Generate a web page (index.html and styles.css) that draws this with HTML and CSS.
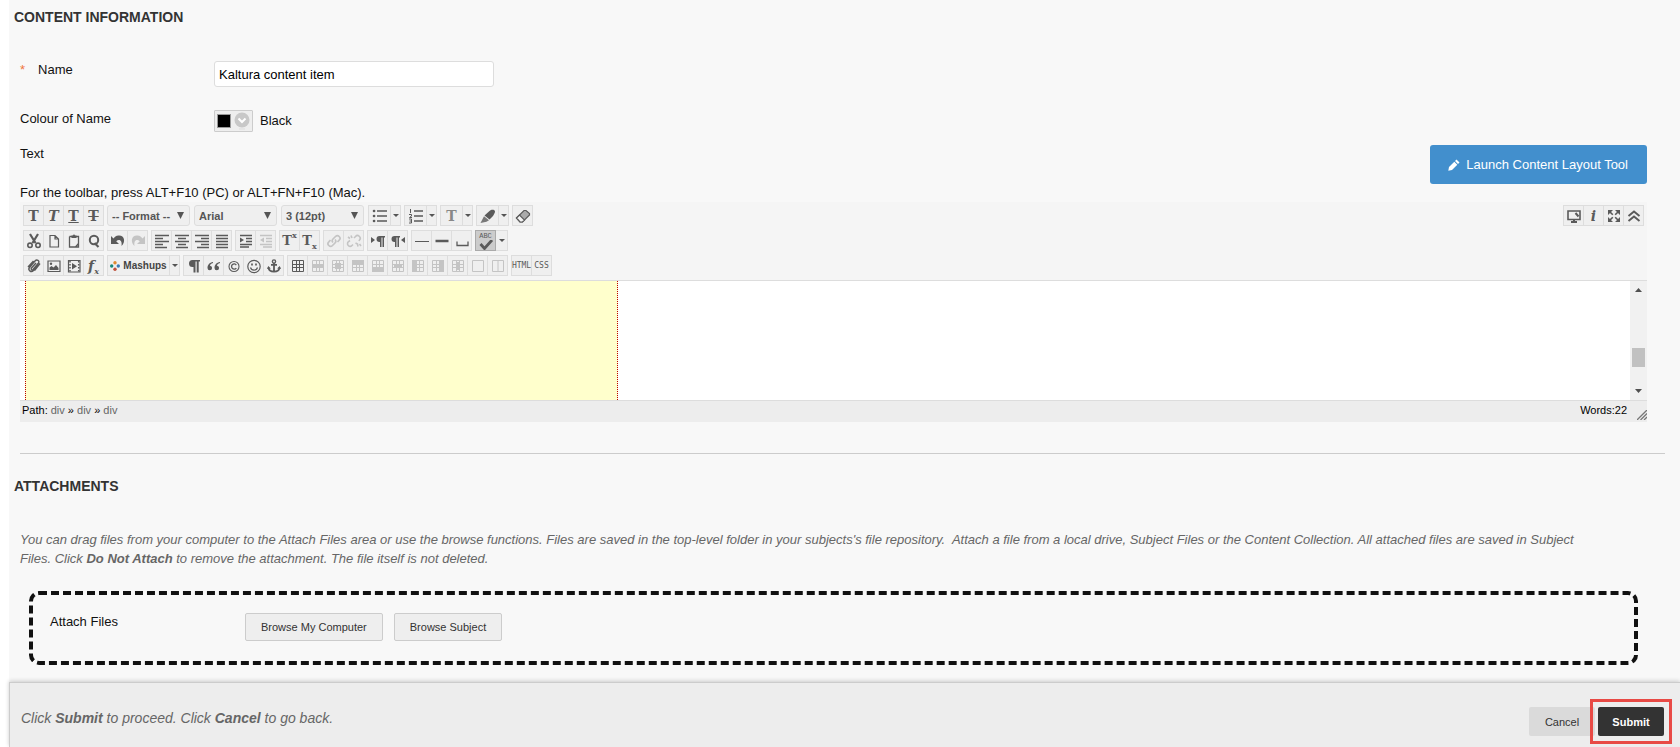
FILE: index.html
```
<!DOCTYPE html>
<html lang="en">

<head>
  <meta charset="utf-8">
  <meta name="viewport" content="width=device-width">
  <title>Edit Item</title>
  <link rel="stylesheet" href="styles.css">
</head>

<body>
  <!-- toolbar icons, all on a 16px grid -->
  <svg class="sprite" aria-hidden="true">
    <symbol id="cut" viewBox="0 0 16 16"><path d="M4 1l5.500 9M12 1L6.500 10" stroke="currentColor" stroke-width="2.200" fill="none"/><circle cx="4" cy="12.300" r="2.200" fill="none" stroke="currentColor" stroke-width="1.600"/><circle cx="12" cy="12.300" r="2.200" fill="none" stroke="currentColor" stroke-width="1.600"/></symbol>
    <symbol id="page" viewBox="0 0 16 16"><path d="M4 2.500h5l3.500 3.500v8H4zM9 2.500V6h3.500" fill="none" stroke="currentColor" stroke-width="1.200"/></symbol>
    <symbol id="paste" viewBox="0 0 16 16"><path d="M3.500 3.500h9v10.500H9.500M3.500 3.500V14H9.500l3-3.500" fill="none" stroke="currentColor" stroke-width="1.300"/><path d="M5.500 5V2.500h1.500a1 1 0 0 1 2 0h1.500V5z" fill="currentColor"/></symbol>
    <symbol id="find" viewBox="0 0 16 16"><circle cx="8" cy="7" r="4.200" fill="none" stroke="currentColor" stroke-width="2"/><path d="M8.500 10l4 4" stroke="currentColor" stroke-width="2.200"/></symbol>
    <symbol id="undo" viewBox="0 0 16 16"><path d="M1 3v8h8L6.200 8.200C9 5.500 12.500 7 11.500 13 16 9 14.500 2 8.500 2.500 6 2.700 4.500 4 3.500 5.500z" fill="currentColor"/></symbol>
    <symbol id="redo" viewBox="0 0 16 16"><path d="M15 3v8H7l2.800-2.800C7 5.500 3.500 7 4.500 13 0 9 1.500 2 7.500 2.500c2.500.2 4 1.500 5 3z" fill="currentColor"/></symbol>
    <symbol id="left" viewBox="0 0 16 16"><path d="M1 2.500h14M1 5.500h8M1 8.500h14M1 11.500h8M1 14.500h12" stroke="currentColor" stroke-width="1.500"/></symbol>
    <symbol id="center" viewBox="0 0 16 16"><path d="M1 2.500h14M4 5.500h8M1 8.500h14M4 11.500h8M2 14.500h12" stroke="currentColor" stroke-width="1.500"/></symbol>
    <symbol id="right" viewBox="0 0 16 16"><path d="M1 2.500h14M7 5.500h8M1 8.500h14M7 11.500h8M3 14.500h12" stroke="currentColor" stroke-width="1.500"/></symbol>
    <symbol id="justify" viewBox="0 0 16 16"><path d="M2 2.500h12M2 5.500h12M2 8.500h12M2 11.500h12M2 14.500h12" stroke="currentColor" stroke-width="1.500"/></symbol>
    <symbol id="indent" viewBox="0 0 16 16"><path d="M2 2.500h12M8 5.500h6M8 8.500h6M2 11.500h12M2 14h9" stroke="currentColor" stroke-width="1.500"/><path d="M2 4.500L6 7 2 9.500z" fill="currentColor"/></symbol>
    <symbol id="outdent" viewBox="0 0 16 16"><path d="M2 2.500h12M8 5.500h6M8 8.500h6M2 11.500h12M5 14h9" stroke="currentColor" stroke-width="1.500"/><path d="M6 4.500L2 7l4 2.500z" fill="currentColor"/></symbol>
    <symbol id="bullets" viewBox="0 0 16 16"><path d="M5 3h10M5 8h10M5 13h10" stroke="currentColor" stroke-width="1.500"/><path d="M2 3h.1M2 8h.1M2 13h.1" stroke="currentColor" stroke-width="2.600" stroke-linecap="round"/></symbol>
    <symbol id="numbers" viewBox="0 0 16 16"><path d="M6 3h9M6 8h9M6 13h9" stroke="currentColor" stroke-width="1.600"/><path d="M2.500 1v4M1 6.500h2.500V8L1.500 9.500h2.500M1 11h2.500v4H1M1.500 13h2" fill="none" stroke="currentColor" stroke-width="1"/></symbol>
    <symbol id="marker" viewBox="0 0 16 16"><path d="M9.500 3c2-2 5.500-1.500 5.500.5 0 1-1 3-2 4.500L9.500 11.500 4.500 7.500z" fill="currentColor"/><path d="M4 8.200l5 4-2.500 1.500L.5 15z" fill="currentColor" opacity=".8"/></symbol>
    <symbol id="eraser" viewBox="0 0 16 16"><path d="M1.500 10L9 2.500h2l3.500 3v1.500L7.500 14H5z" fill="#aaa" stroke="currentColor" stroke-width="1.200"/><path d="M1.500 10l3-3 5 5-2 2H5z" fill="#f4f4f4" stroke="currentColor" stroke-width="1.200"/></symbol>
    <symbol id="link" viewBox="0 0 16 16"><path d="M7 9.500a2.500 2.500 0 0 1 0-3.500l2.500-2.500a2.500 2.500 0 0 1 3.700 3.700L11.500 9M9 6.500a2.500 2.500 0 0 1 0 3.500l-2.500 2.500a2.500 2.500 0 0 1-3.700-3.700L4.500 7" fill="none" stroke="currentColor" stroke-width="1.700"/></symbol>
    <symbol id="unlink" viewBox="0 0 16 16"><path d="M8 5l1.500-1.500a2.500 2.500 0 0 1 4 3.500L13 8M7 11.500l-1 1a2.500 2.500 0 0 1-3.700-3.700L4 7.500M9.500 10l2 1 .5 2.500M5 2.500L6 5M13.500 11l1.500 2M2 4l2 1.500" fill="none" stroke="currentColor" stroke-width="1.600"/></symbol>
    <symbol id="ltr" viewBox="0 0 16 16"><path d="M15 3H9.500a3 3 0 0 0 0 6h.5v5h1.500V4.500h1V14H14V4.500h1zM1 4l4 3-4 3z" fill="currentColor"/></symbol>
    <symbol id="rtl" viewBox="0 0 16 16"><path d="M10 3H4.500a3 3 0 0 0 0 6H5v5h1.500V4.500h1V14H9V4.500h1zM15 4l-4 3 4 3z" fill="currentColor"/></symbol>
    <symbol id="rule" viewBox="0 0 16 16"><path d="M1 8.500h14" stroke="currentColor"/></symbol>
    <symbol id="thick" viewBox="0 0 16 16"><path d="M1.500 8h13" stroke="currentColor" stroke-width="2.500"/></symbol>
    <symbol id="space" viewBox="0 0 16 16"><path d="M3 8.500v4h11v-4" fill="none" stroke="currentColor" stroke-width="1.300"/></symbol>
    <symbol id="check" viewBox="0 0 16 10"><path d="M2.500 4l4 4.500L14 0" fill="none" stroke="currentColor" stroke-width="2.800"/></symbol>
    <symbol id="clip" viewBox="0 0 16 16"><path d="M12.500 7l-5 5.500c-2.500 2.500-6-.5-4-3L9 3c1.800-2 5-.3 3.500 2L7 11.500c-1.200 1-2.500-.3-1.500-1.500l4.500-5M14 5.500l-5.500 7.200M2 9l5.500-6" fill="none" stroke="currentColor" stroke-width="1.400"/></symbol>
    <symbol id="image" viewBox="0 0 16 16"><path d="M2 3h12v10.500H2z" fill="none" stroke="currentColor" stroke-width="1.200"/><path d="M3.500 12V9.500l2-1.500 2 1.500L10 7l2.500 3v2z" fill="currentColor"/><circle cx="5" cy="5.800" r="1.200" fill="currentColor"/></symbol>
    <symbol id="video" viewBox="0 0 16 16"><path d="M2.500 2.500h11.500V14H2.500z" fill="none" stroke="currentColor" stroke-width="1.200"/><path d="M6 5l5 3.200-5 3.300z" fill="currentColor"/><path d="M4 3v11M12.700 3v11" stroke="currentColor" stroke-width="1.500" stroke-dasharray="1.500 1.500"/></symbol>
    <symbol id="quote" viewBox="0 0 16 16"><path d="M7 4C3.500 4.500 1.500 7 1.500 10a2.300 2.300 0 1 0 2.500-2.300C4.200 6.500 5.200 5.300 7 5zM14 4c-3.500.5-5.500 3-5.500 6A2.300 2.300 0 1 0 11 7.700c.2-1.200 1.200-2.400 3-2.700z" fill="currentColor"/></symbol>
    <symbol id="pilcrow" viewBox="0 0 16 16"><path d="M14 2H6.500a3.500 3.500 0 0 0 0 7H7.500v5.500h2V3.500h1.200v11h2v-11H14z" fill="currentColor"/></symbol>
    <symbol id="copyright" viewBox="0 0 16 16"><circle cx="8" cy="8.500" r="5" fill="none" stroke="currentColor" stroke-width="1.100"/><path d="M10.300 7a2.600 2.600 0 1 0 0 3" fill="none" stroke="currentColor" stroke-width="1.300"/></symbol>
    <symbol id="smile" viewBox="0 0 16 16"><circle cx="8" cy="8.500" r="6.200" fill="none" stroke="currentColor" stroke-width="1.200"/><path d="M4.500 9.500c1 3.500 6 3.500 7 0" fill="none" stroke="currentColor" stroke-width="1.200"/><path d="M6 5.500v2M10 5.500v2" stroke="currentColor" stroke-width="1.700"/></symbol>
    <symbol id="anchor" viewBox="0 0 16 16"><circle cx="8" cy="3.500" r="1.600" fill="none" stroke="currentColor" stroke-width="1.400"/><path d="M8 5v9M5 6.800h6M2.500 9.500c.5 5.500 10.500 5.500 11 0" fill="none" stroke="currentColor" stroke-width="1.800"/><path d="M1 11l1.300-3 2.500 2.500zM15 11l-1.300-3-2.500 2.500z" fill="currentColor"/></symbol>
    <symbol id="grid" viewBox="0 0 16 16"><path d="M2.500 2.500h11v11h-11zM2.500 6.500h11M2.500 9.500h11M6.500 2.500v11M9.500 2.500v11" fill="none" stroke="currentColor"/></symbol>
    <symbol id="cell" viewBox="0 0 16 16"><path d="M2.500 2.500h11v11h-11z" fill="none" stroke="currentColor"/></symbol>
    <symbol id="monitor" viewBox="0 0 16 16"><path d="M2 3h12v8.500H2z" fill="none" stroke="currentColor" stroke-width="1.600"/><path d="M5 14h6M8 11v3M9.500 5l3 3.500" stroke="currentColor" stroke-width="2"/></symbol>
    <symbol id="expand" viewBox="0 0 16 16"><path d="M2 2h5L2 7zM14 2v5L9 2zM2 14V9l5 5zM14 14H9l5-5z" fill="currentColor"/><path d="M3 3l3.800 3.800M13 3L9.200 6.800M3 13l3.800-3.800M13 13L9.200 9.200" stroke="currentColor" stroke-width="1.600"/></symbol>
    <symbol id="collapse" viewBox="0 0 16 16"><path d="M2.500 8L8 3.500 13.500 8M2.500 13L8 8.500l5.500 4.500" fill="none" stroke="currentColor" stroke-width="1.900"/></symbol>
  </svg>

  <main class="page">
    <form class="content-form" id="content-form">
      <section class="step">
        <h2>Content Information</h2>
        <div class="field name-field">
          <label for="name"><span class="required">*</span>Name</label>
          <input type="text" id="name" value="Kaltura content item">
        </div>
        <div class="field colour-field">
          <label for="colour">Colour of Name</label>
          <button type="button" class="colour" id="colour">
            <span class="swatch"></span>
            <svg width="16" height="18" viewBox="0 0 16 18"><circle cx="8" cy="8" r="7.500" fill="#c8c8c8"/><path d="M4.500 6.500L8 10l3.500-3.500" fill="none" stroke="#fff" stroke-width="2"/><path d="M5 17h6" stroke="#ddd"/></svg>
          </button>
          <span>Black</span>
        </div>
        <div class="text-head">
          <span>Text</span>
          <button type="button" class="launch">
            <svg width="12" height="12" viewBox="0 0 12 12"><path d="M8.500.5l3 3L10 5 7 2zM6.300 2.700l3 3L4 11l-3.700.7L1 8z" fill="#fff"/></svg>
            Launch Content Layout Tool
          </button>
        </div>
        <p class="hint">For the toolbar, press ALT+F10 (PC) or ALT+FN+F10 (Mac).</p>

        <div class="editor">
          <div class="toolbar">
            <div class="toolrow">
              <div class="group">
                <button type="button" class="serif">T</button>
                <button type="button" class="serif italic">T</button>
                <button type="button" class="serif underline">T</button>
                <button type="button" class="serif strike">T</button>
              </div>
              <select aria-label="Format"><option>-- Format --</option></select>
              <select aria-label="Font"><option>Arial</option></select>
              <select aria-label="Size"><option>3 (12pt)</option></select>
              <div class="group split">
                <button type="button" aria-label="Bullets"><svg><use href="#bullets"/></svg></button>
                <button type="button" class="arrow" aria-label="Bullet styles"></button>
              </div>
              <div class="group split">
                <button type="button" aria-label="Numbers"><svg><use href="#numbers"/></svg></button>
                <button type="button" class="arrow" aria-label="Number styles"></button>
              </div>
              <div class="group split">
                <button type="button" class="serif light">T</button>
                <button type="button" class="arrow" aria-label="Text colours"></button>
              </div>
              <div class="group split">
                <button type="button" aria-label="Highlight"><svg><use href="#marker"/></svg></button>
                <button type="button" class="arrow" aria-label="Highlight colours"></button>
              </div>
              <div class="group">
                <button type="button" aria-label="Remove formatting"><svg><use href="#eraser"/></svg></button>
              </div>
              <div class="group end">
                <button type="button" aria-label="Preview"><svg><use href="#monitor"/></svg></button>
                <button type="button" class="serif italic">i</button>
                <button type="button" aria-label="Full screen"><svg><use href="#expand"/></svg></button>
                <button type="button" aria-label="Show less"><svg><use href="#collapse"/></svg></button>
              </div>
            </div>

            <div class="toolrow">
              <div class="group">
                <button type="button" aria-label="Cut"><svg><use href="#cut"/></svg></button>
                <button type="button" aria-label="Copy"><svg><use href="#page"/></svg></button>
                <button type="button" aria-label="Paste"><svg><use href="#paste"/></svg></button>
                <button type="button" aria-label="Find"><svg><use href="#find"/></svg></button>
              </div>
              <div class="group">
                <button type="button" aria-label="Undo"><svg><use href="#undo"/></svg></button>
                <button type="button" aria-label="Redo" disabled><svg><use href="#redo"/></svg></button>
              </div>
              <div class="group">
                <button type="button" aria-label="Align left"><svg><use href="#left"/></svg></button>
                <button type="button" aria-label="Align center"><svg><use href="#center"/></svg></button>
                <button type="button" aria-label="Align right"><svg><use href="#right"/></svg></button>
                <button type="button" aria-label="Justify"><svg><use href="#justify"/></svg></button>
              </div>
              <div class="group">
                <button type="button" aria-label="Indent"><svg><use href="#indent"/></svg></button>
                <button type="button" aria-label="Outdent" disabled><svg><use href="#outdent"/></svg></button>
              </div>
              <div class="group">
                <button type="button" class="serif small">T<sup>x</sup></button>
                <button type="button" class="serif small">T<sub>x</sub></button>
              </div>
              <div class="group">
                <button type="button" aria-label="Link" disabled><svg><use href="#link"/></svg></button>
                <button type="button" aria-label="Unlink" disabled><svg><use href="#unlink"/></svg></button>
              </div>
              <div class="group">
                <button type="button" aria-label="Left to right"><svg><use href="#ltr"/></svg></button>
                <button type="button" aria-label="Right to left"><svg><use href="#rtl"/></svg></button>
              </div>
              <div class="group">
                <button type="button" aria-label="Thin line"><svg><use href="#rule"/></svg></button>
                <button type="button" aria-label="Thick line"><svg><use href="#thick"/></svg></button>
                <button type="button" aria-label="Space"><svg><use href="#space"/></svg></button>
              </div>
              <div class="group">
                <button type="button" class="spell">ABC<svg><use href="#check"/></svg></button>
                <button type="button" class="arrow" aria-label="Languages"></button>
              </div>
            </div>

            <div class="toolrow">
              <div class="group">
                <button type="button" aria-label="Attach"><svg><use href="#clip"/></svg></button>
                <button type="button" aria-label="Image"><svg><use href="#image"/></svg></button>
                <button type="button" aria-label="Media"><svg><use href="#video"/></svg></button>
                <button type="button" class="serif italic fx"><span>f</span><sub>x</sub></button>
              </div>
              <div class="group">
                <button type="button" class="mashups"><svg viewBox="0 0 10 10"><circle cx="5" cy="1.700" r="1.700" fill="#e08a30"/><circle cx="1.700" cy="5" r="1.700" fill="#16867a"/><circle cx="8.300" cy="5" r="1.700" fill="#3a7ab5"/><circle cx="5" cy="8.300" r="1.700" fill="#c0503c"/></svg>Mashups</button>
                <button type="button" class="arrow" aria-label="Mashup types"></button>
              </div>
              <div class="group">
                <button type="button" aria-label="Paragraph marks"><svg><use href="#pilcrow"/></svg></button>
                <button type="button" aria-label="Quote"><svg><use href="#quote"/></svg></button>
                <button type="button" aria-label="Symbol"><svg><use href="#copyright"/></svg></button>
                <button type="button" aria-label="Emoticon"><svg><use href="#smile"/></svg></button>
                <button type="button" aria-label="Anchor"><svg><use href="#anchor"/></svg></button>
              </div>
              <div class="group">
                <button type="button" aria-label="Table"><svg><use href="#grid"/></svg></button>
                <button type="button" aria-label="Row properties" disabled><svg viewBox="0 0 16 16"><use href="#grid"/><path d="M2 6h12v4H2z" fill="currentColor"/></svg></button>
                <button type="button" aria-label="Cell properties" disabled><svg viewBox="0 0 16 16"><use href="#grid"/><path d="M5 5h6v6H5z" fill="currentColor"/></svg></button>
                <button type="button" aria-label="Row above" disabled><svg viewBox="0 0 16 16"><use href="#grid"/><path d="M2 2h12v4H2z" fill="currentColor"/></svg></button>
                <button type="button" aria-label="Row below" disabled><svg viewBox="0 0 16 16"><use href="#grid"/><path d="M2 10h12v4H2z" fill="currentColor"/></svg></button>
                <button type="button" aria-label="Delete row" disabled><svg viewBox="0 0 16 16"><use href="#grid"/><path d="M4 6h8v4H4z" fill="currentColor"/></svg></button>
                <button type="button" aria-label="Column before" disabled><svg viewBox="0 0 16 16"><use href="#grid"/><path d="M2 2h4v12H2z" fill="currentColor"/></svg></button>
                <button type="button" aria-label="Column after" disabled><svg viewBox="0 0 16 16"><use href="#grid"/><path d="M10 2h4v12h-4z" fill="currentColor"/></svg></button>
                <button type="button" aria-label="Delete column" disabled><svg viewBox="0 0 16 16"><use href="#grid"/><path d="M6 4h4v8H6z" fill="currentColor"/></svg></button>
                <button type="button" aria-label="Merge cells" disabled><svg><use href="#cell"/></svg></button>
                <button type="button" aria-label="Split cells" disabled><svg viewBox="0 0 16 16"><use href="#cell"/><path d="M8 3v11" stroke="currentColor"/></svg></button>
              </div>
              <div class="group">
                <button type="button" class="code">HTML</button>
                <button type="button" class="code">CSS</button>
              </div>
            </div>
          </div>

          <div class="canvas">
            <div class="document"><div class="embed"></div></div>
            <div class="scrollbar">
              <svg width="7" height="4" viewBox="0 0 7 4"><path d="M0 4l3.500-4L7 4z" fill="#505050"/></svg>
              <span class="thumb"></span>
              <svg width="7" height="4" viewBox="0 0 7 4"><path d="M0 0l3.500 4L7 0z" fill="#505050"/></svg>
            </div>
          </div>
          <div class="status">
            <span>Path: <a href="#">div</a> » <a href="#">div</a> » <a href="#">div</a></span>
            <span class="words">Words:22</span>
            <svg width="10" height="10" viewBox="0 0 10 10"><path d="M0 10L10 0M3.500 10L10 3.500M7 10l3-3" stroke="#777" stroke-width="1.300"/></svg>
          </div>
        </div>
      </section>

      <section class="step attachments">
        <h2>Attachments</h2>
        <p class="instructions">You can drag files from your computer to the Attach Files area or use the browse functions. Files are saved in the top-level folder in your subjects's file repository.&nbsp; Attach a file from a local drive, Subject Files or the Content Collection. All attached files are saved in Subject<br>
          Files. Click <strong>Do Not Attach</strong> to remove the attachment. The file itself is not deleted.</p>
        <div class="dropzone">
          <span class="drop-label">Attach Files</span>
          <button type="button">Browse My Computer</button>
          <button type="button">Browse Subject</button>
        </div>
      </section>
    </form>

    <footer class="submit-bar">
      <p>Click <strong>Submit</strong> to proceed. Click <strong>Cancel</strong> to go back.</p>
      <button type="button" class="cancel">Cancel</button>
      <div class="highlight">
        <button type="submit" class="submit" form="content-form">Submit</button>
      </div>
    </footer>
  </main>
</body>

</html>
```
FILE: styles.css
```
* {
  box-sizing: border-box;
}

body {
  margin: 0;
  background: #fff;
  color: #111;
  font: 13px/18px "Liberation Sans", Arial, sans-serif;
}

button,
input,
select {
  font-family: inherit;
}

.sprite {
  display: none;
}

.page {
  display: flex;
  flex-direction: column;
  min-height: 100vh;
  margin-left: 9px;
  background: #f8f8f8;
}

.content-form {
  padding: 8px 15px 17px 5px;
}

.step {
  padding: 0 18px 0 6px;
}

h2 {
  margin: 0 0 0 -6px;
  color: #333;
  font-size: 14px;
  line-height: 18px;
  text-transform: uppercase;
}

.field {
  display: flex;
  align-items: flex-start;
}

.field label {
  width: 194px;
}

.name-field {
  padding-top: 35px;
}

.name-field label {
  display: flex;
  gap: 13px;
}

.required {
  color: #f0773c;
}

.name-field input {
  width: 280px;
  height: 26px;
  padding: 0 4px;
  border: 1px solid #ddd;
  border-radius: 3px;
  background: #fff;
  color: #000;
  font-size: 13px;
}

.colour-field {
  padding-top: 23px;
}

.colour-field > span {
  padding: 2px 7px;
}

.colour {
  display: flex;
  align-items: center;
  gap: 3px;
  width: 39px;
  height: 22px;
  padding: 0 2px;
  border: 1px solid #ccc;
  border-radius: 1px;
  background: #eee;
}

.colour svg {
  flex: none;
}

.swatch {
  flex: none;
  width: 14px;
  height: 14px;
  border: 1px solid #999;
  background: #000;
}

.text-head {
  display: flex;
  justify-content: space-between;
  padding-top: 13px;
}

.launch {
  display: flex;
  align-items: center;
  gap: 6px;
  height: 39px;
  padding: 0 19px 0 18px;
  border: 0;
  border-radius: 3px;
  background: #428fcd;
  color: #fff;
  font-size: 13px;
}

.hint {
  margin: 0;
}

.editor {
  background: #f5f5f5;
}

.toolbar {
  display: flex;
  flex-direction: column;
  gap: 4px;
  padding: 3px 3px 4px;
}

.toolrow {
  display: flex;
  gap: 3px;
  height: 21px;
}

.group {
  display: flex;
}

.end {
  margin-left: auto;
}

.group button {
  display: flex;
  align-items: center;
  justify-content: center;
  width: 20px;
  height: 21px;
  padding: 0;
  border: 1px solid #ddd;
  border-left-width: 0;
  background: #efefef;
  color: #5a5a5a;
}

.group button:first-child {
  width: 21px;
  border-left-width: 1px;
}

.group svg {
  flex: none;
  width: 16px;
  height: 16px;
}

.group button:disabled {
  color: #c4c4c4;
}

.group .serif {
  font: bold 14px/18px "DejaVu Serif", serif;
}

.group .italic {
  font-style: italic;
}

.underline {
  text-decoration: underline;
}

.strike {
  text-decoration: line-through;
}

.group .light {
  color: #888;
}

.group .small {
  font-size: 13px;
}

.group .small sup,
.group .small sub,
.fx sub {
  font-size: 8px;
  line-height: 8px;
}

.small sup {
  align-self: flex-start;
}

.small sub,
.fx sub {
  align-self: flex-end;
}

.group .arrow {
  width: 12px;
}

.split .arrow {
  width: 10px;
}

.group.split button:first-child {
  width: 23px;
}

.arrow::after {
  content: "";
  border: 3px solid transparent;
  border-top-color: #555;
  border-bottom-width: 0;
}

.group .spell {
  flex-direction: column;
  background: #ccc;
  border-color: #aaa;
  font: 7px/8px "Liberation Mono", monospace;
}

.group .spell svg {
  height: 10px;
}

.group .mashups {
  gap: 3px;
  font-size: 10px;
  font-weight: bold;
  color: #444;
}

.group .mashups:first-child {
  width: 63px;
}

.group .mashups svg {
  width: 10px;
  height: 10px;
}

.group .mashups + .arrow {
  width: 10px;
}

.group .code {
  font: 8px/10px "DejaVu Sans Mono", monospace;
}

.toolbar select {
  appearance: none;
  width: 83px;
  height: 21px;
  margin: 0 1px 0 0;
  padding: 0 4px;
  border: 1px solid #ddd;
  border-radius: 3px;
  background: #efefef url("data:image/svg+xml,%3Csvg xmlns='http://www.w3.org/2000/svg' width='7' height='7'%3E%3Cpath d='M0 0h7L3.500 7z' fill='%23555'/%3E%3C/svg%3E") no-repeat right 5px center;
  color: #555;
  font-size: 11px;
  font-weight: bold;
}

.canvas {
  display: flex;
  height: 121px;
  border: 1px solid #ddd;
  border-width: 1px 0;
  background: #fff;
}

.document {
  flex: 1;
  padding-left: 5px;
}

.embed {
  width: 593px;
  height: 100%;
  border: 1px dotted #b00;
  border-width: 0 1px;
  background: #ffc;
}

.scrollbar {
  display: flex;
  flex-direction: column;
  align-items: center;
  width: 17px;
  padding: 7px 0;
  background: #f1f1f1;
}

.thumb {
  width: 13px;
  height: 19px;
  margin: auto 0 22px;
  background: #c1c1c1;
}

.status {
  display: flex;
  height: 21px;
  padding: 0 0 0 2px;
  background: #ededed;
  color: #000;
  font-size: 11px;
  line-height: 19px;
}

.status a {
  color: #666;
  text-decoration: none;
}

.words {
  margin-left: auto;
  padding-right: 10px;
}

.status svg {
  align-self: flex-end;
  margin-bottom: 2px;
}

.attachments {
  margin-top: 31px;
  padding-top: 24px;
  position: relative;
}

.attachments::before {
  content: "";
  position: absolute;
  top: 0;
  left: 6px;
  right: 0;
  border-top: 1px solid #ccc;
}

.instructions {
  margin: 35px 0 23px;
  color: #666;
  font-size: 13px;
  line-height: 19px;
  font-style: italic;
}

.dropzone {
  display: flex;
  align-items: flex-start;
  min-height: 74px;
  margin: 0 9px;
  padding: 18px 17px;
  border: 4px dashed #111;
  border-radius: 10px;
}

.drop-label {
  width: 195px;
}

.dropzone button {
  height: 28px;
  margin-right: 11px;
  padding: 0 15px;
  border: 1px solid #ccc;
  border-radius: 2px;
  background: #eee;
  color: #333;
  font-size: 11px;
}

.submit-bar {
  display: flex;
  flex: 1;
  align-items: flex-start;
  gap: 3px;
  padding: 24px 16px 11px 11px;
  border: 1px solid #ccc;
  border-width: 1px 0 0 1px;
  background: #ededed;
  box-shadow: 0 -1px 4px #ccc;
}

.submit-bar p {
  flex: 1;
  margin: 2px 0;
  color: #666;
  font-size: 14px;
  font-style: italic;
}

.submit-bar button {
  width: 66px;
  height: 29px;
  padding: 0;
  border: 0;
  border-radius: 2px;
  font-size: 11px;
}

.cancel {
  background: #dadada;
  color: #333;
}

.submit-bar .submit {
  background: #333;
  color: #fff;
  font-weight: bold;
}

.highlight {
  position: relative;
}

.highlight::after {
  content: "";
  position: absolute;
  inset: -8px;
  border: 3px solid #e84a45;
  pointer-events: none;
}
```
